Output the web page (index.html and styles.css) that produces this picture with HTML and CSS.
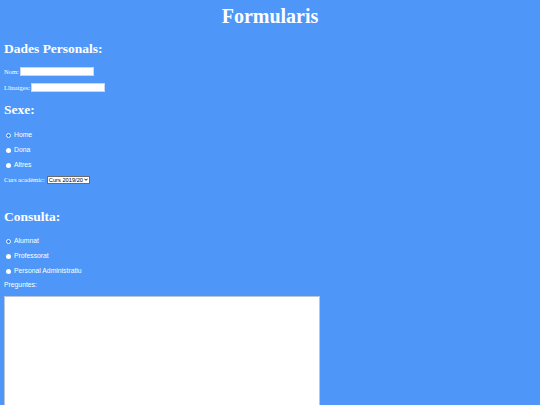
FILE: index.html
```html
<!DOCTYPE html>
<html lang="ca">
<head>
<meta charset="utf-8">
<title>Formularis</title>
<link rel="stylesheet" href="styles.css">
</head>
<body>
<h1 class="title">Formularis</h1>
<form class="form">
  <h2 class="section section-first">Dades Personals:</h2>
  <div class="field"><label class="lbl" for="nom">Nom:</label><input class="text" id="nom" type="text"></div>
  <div class="field"><label class="lbl" for="llin">Llinatges:</label><input class="text" id="llin" type="text"></div>

  <h2 class="section">Sexe:</h2>
  <div class="radios">
    <label class="radio"><input type="radio" name="sexe" checked><span>Home</span></label>
    <label class="radio"><input type="radio" name="sexe"><span>Dona</span></label>
    <label class="radio"><input type="radio" name="sexe"><span>Altres</span></label>
  </div>
  <div class="field curs"><label class="lbl" for="curs">Curs acadèmic:</label>
    <span class="select" id="curs"><span>Curs 2019/20</span><svg class="chev" viewBox="0 0 6 4" width="4" height="3"><path d="M0.6 0.8 L3 3.2 L5.4 0.8" fill="none" stroke="#000" stroke-width="1.4"/></svg></span>
  </div>

  <h2 class="section consulta">Consulta:</h2>
  <div class="radios">
    <label class="radio"><input type="radio" name="cons" checked><span>Alumnat</span></label>
    <label class="radio"><input type="radio" name="cons"><span>Professorat</span></label>
    <label class="radio"><input type="radio" name="cons"><span>Personal Administratiu</span></label>
  </div>
  <div class="preg">Preguntes:</div>
  <textarea class="area"></textarea>
</form>
</body>
</html>
```
FILE: styles.css
```css
html, body {
  margin: 0;
  padding: 0;
}
body {
  background: #4e97f8;
  color: #ffffff;
  font-family: "Liberation Serif", serif;
  padding: 0 4px;
  height: 405px;
  overflow: hidden;
}
.title {
  margin: 0;
  padding-top: 4px;
  font-size: 20px;
  line-height: 24px;
  font-weight: bold;
  text-align: center;
}
.form {
  display: flex;
  flex-direction: column;
  align-items: flex-start;
}
.section {
  margin: 0;
  font-size: 13.5px;
  line-height: 16px;
  font-weight: bold;
}
.section-first {
  margin-top: 13px;
}
.field + .section {
  margin-top: 10px;
}
.field + .section.consulta {
  margin-top: 25px;
}
.field {
  display: flex;
  align-items: center;
  font-size: 6.5px;
  height: 9px;
}
.field + .field {
  margin-top: 7px;
}
.section + .field {
  margin-top: 10px;
}
.lbl {
  margin-right: 1px;
}
.text {
  width: 74px;
  height: 9px;
  box-sizing: border-box;
  border: 1px solid #c9d7ee;
  background: #fff;
  padding: 0;
  margin: 0;
}
.radios {
  display: flex;
  flex-direction: column;
  gap: 7px;
  margin-top: 13px;
  font-family: "Liberation Sans", sans-serif;
  font-size: 6.8px;
  line-height: 8px;
}
.consulta + .radios {
  margin-top: 12px;
}
.radio {
  display: flex;
  align-items: center;
  height: 8px;
}
.radio input {
  appearance: none;
  -webkit-appearance: none;
  width: 5px;
  height: 5px;
  margin: 0 3px 0 2px;
  border-radius: 50%;
  background: #fff;
  box-sizing: border-box;
}
.radio input:checked {
  background: #2f7fe8;
  border: 1px solid #f4f8ff;
}
.curs {
  margin-top: 6px;
  font-size: 6.6px;
}
.select {
  display: inline-flex;
  align-items: center;
  gap: 1px;
  height: 8px;
  box-sizing: border-box;
  padding: 0 1px 0 1px;
  background: #fff;
  border: 1px solid #6b6b6b;
  color: #000;
  font-family: "Liberation Sans", sans-serif;
  font-size: 5.7px;
  margin-left: 1px;
}
.preg {
  margin-top: 6px;
  font-family: "Liberation Sans", sans-serif;
  font-size: 6.8px;
  line-height: 8px;
}
.area {
  margin-top: 7px;
  width: 316px;
  height: 112px;
  box-sizing: border-box;
  border: 1px solid #b8c6dc;
  background: #fff;
  resize: none;
  padding: 0;
}
```
